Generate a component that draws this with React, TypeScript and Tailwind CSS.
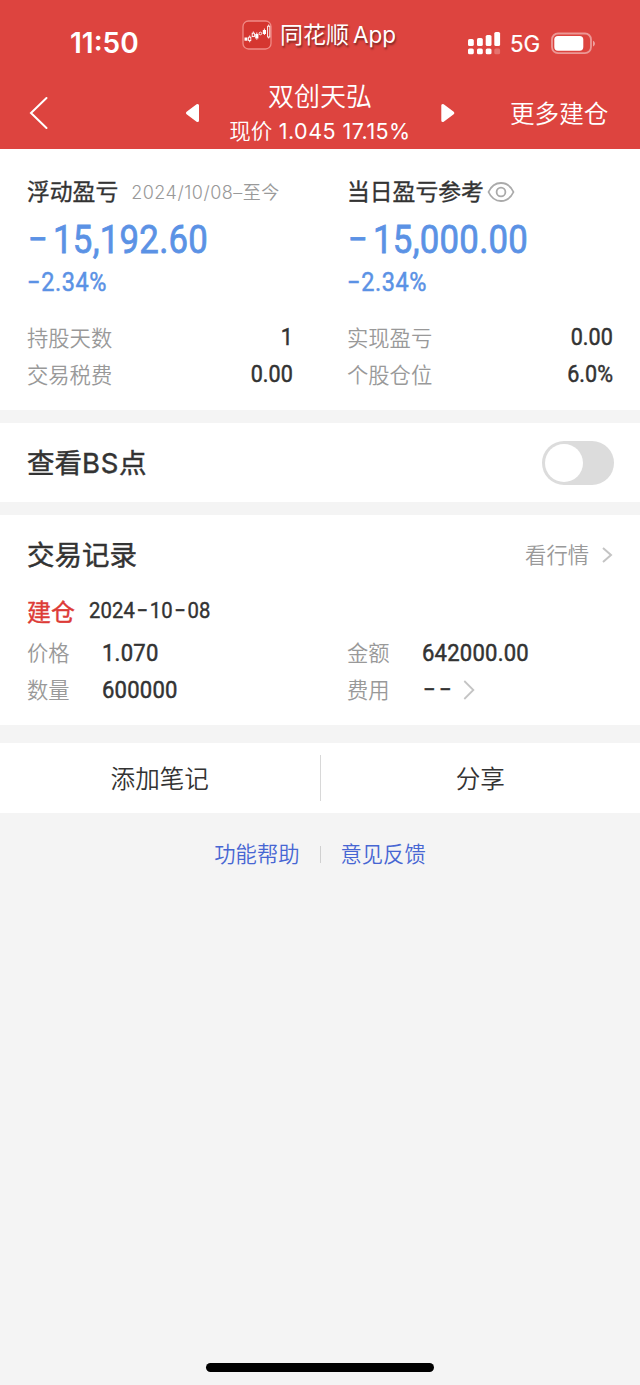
import React, { useState } from 'react';

interface StatProps {
  label: string;
  value: string;
}

interface ProfitColumnProps {
  title: React.ReactNode;
  amount: string;
  percent: string;
  stats: StatProps[];
}

const floatingStats: StatProps[] = [
  { label: '持股天数', value: '1' },
  { label: '交易税费', value: '0.00' },
];

const dailyStats: StatProps[] = [
  { label: '实现盈亏', value: '0.00' },
  { label: '个股仓位', value: '6.0%' },
];

function StatusBar() {
  return (
    <div className="flex h-[76px] items-start">
      <div className="w-[242px] pl-[70px] pt-[27px] text-[28px] leading-[32px] font-semibold">11:50</div>
      <div className="flex w-[225px] items-center pt-[19px]">
        <svg width="30" height="30" viewBox="0 0 30 30" fill="none">
          <rect x="1" y="1" width="28" height="28" rx="5.5" fill="#d53630" stroke="#f08b86" strokeWidth="1.3" />
          <g fill="#fff">
            <rect x="2.5" y="17.5" width="3" height="3.2" />
            <rect x="13.2" y="14" width="3.2" height="4.5" />
            <rect x="20.8" y="10" width="3.2" height="4" />
          </g>
          <g stroke="#fff" strokeWidth="0.9">
            <rect x="6.6" y="17.2" width="2.2" height="3.4" />
            <path d="M7.7 15.5v1.7M7.7 20.6v1.7M11.3 11.5v1.7M14.8 12.5V14M14.8 18.5v1.2M22.4 8.5V10M22.4 14v1M26.7 4.5v1.7M26.7 17v1.5" />
            <rect x="10.2" y="13.2" width="2.2" height="3.4" />
            <circle cx="18.4" cy="13.5" r="1.3" />
            <rect x="25.6" y="6.2" width="2.2" height="10.8" />
          </g>
        </svg>
        <span className="ml-[8px] text-[23px] leading-[32px] whitespace-nowrap [text-shadow:1px_2px_2px_rgba(0,0,0,0.45)]">
          同花顺<span className="ml-[4px] text-[22.5px]">App</span>
        </span>
      </div>
      <div className="flex items-center pt-[25px]">
        <svg width="34" height="24" viewBox="0 0 34 24" fill="#fff">
          <rect x="1" y="7" width="5.8" height="7" rx="1.6" />
          <rect x="10" y="6" width="5.8" height="8" rx="1.6" />
          <rect x="18.7" y="3" width="5.8" height="11" rx="1.6" />
          <rect x="27.3" y="0" width="5.8" height="14" rx="1.6" />
          <rect x="1" y="16.500" width="5.8" height="5.8" rx="1.6" />
          <rect x="10" y="16.500" width="5.8" height="5.8" rx="1.6" />
          <rect x="18.7" y="16.500" width="5.8" height="5.8" rx="1.6" />
          <rect x="27.3" y="16.500" width="5.8" height="5.8" rx="1.6" fillOpacity="0.25" />
        </svg>
        <span className="ml-[9px] pt-px text-[22.3px] leading-[36px] [-webkit-text-stroke:0.2px]">5G</span>
        <svg width="46" height="24" viewBox="0 0 46 24" fill="none" className="ml-[10px]">
          <rect x="2" y="1.5" width="39" height="19.6" rx="6" stroke="#fff" strokeOpacity="0.45" strokeWidth="1.8" />
          <rect x="4.3" y="3.9" width="29" height="14.8" rx="3.6" fill="#fff" />
          <path d="M43 8.800c2.6 1 2.6 4.8 0 5.8z" fill="#fff" fillOpacity="0.5" />
        </svg>
      </div>
    </div>
  );
}

function NavBar() {
  return (
    <div className="flex h-[73px] items-center">
      <button className="w-[185px] pl-[28px]">
        <svg width="22" height="34" viewBox="0 0 22 34" fill="none" stroke="#fff" strokeWidth="2" strokeLinecap="round">
          <path d="M18.5 2 3 17l15.5 15" />
        </svg>
      </button>
      <svg width="16" height="20" viewBox="0 0 16 20" fill="#fff" stroke="#fff" strokeWidth="3" strokeLinejoin="round">
        <path d="M12.5 2.5v15L2.500 10z" />
      </svg>
      <div className="w-[238px] pt-[3px] text-center font-[350]">
        <div className="text-[26px] leading-[34px]">双创天弘</div>
        <div className="text-[21.5px] leading-[34px] whitespace-nowrap">
          现价<span className="font-normal tracking-[0.45px]"> 1.045 17.15%</span>
        </div>
      </div>
      <svg width="16" height="20" viewBox="0 0 16 20" fill="#fff" stroke="#fff" strokeWidth="3" strokeLinejoin="round">
        <path d="M3.8 2.5v15L13.8 10z" />
      </svg>
      <button className="ml-[55px] pt-[3px] text-[24.6px] font-[350] whitespace-nowrap">更多建仓</button>
    </div>
  );
}

function ProfitColumn({ title, amount, percent, stats }: ProfitColumnProps) {
  return (
    <div className="w-[266px]">
      <div className="flex h-[34px] items-center whitespace-nowrap">{title}</div>
      <div className="h-[56px] origin-left scale-x-[0.88] pt-px font-[Roboto] text-[39.5px] leading-[60px] text-[#5b92e5] [-webkit-text-stroke:0.8px]">
        <span className="mr-[6px] ml-[1px]">−</span>
        <span className="tracking-[0.3px]">{amount}</span>
      </div>
      <div className="h-[34px] origin-left scale-x-[0.92] font-[Roboto] text-[25.5px] leading-[34px] text-[#5b92e5] [-webkit-text-stroke:0.5px]">
        <span className="mr-[1px]">−</span>
        <span className="tracking-[0.6px]">{percent}</span>
      </div>
      <div className="mt-[20px]">
        {stats.map((stat) => (
          <div key={stat.label} className="flex h-[37px] items-center justify-between">
            <span className="pt-[2px] text-[21.3px] font-[350] text-[#999]">{stat.label}</span>
            <span className="origin-right scale-x-[0.88] font-[Roboto] text-[24.5px] [-webkit-text-stroke:0.5px]">{stat.value}</span>
          </div>
        ))}
      </div>
    </div>
  );
}

function RecordItem({ label, children }: { label: string; children: React.ReactNode }) {
  return (
    <div className="flex h-[37px] w-[320px] shrink-0 items-center">
      <span className="w-[75px] pt-[2px] text-[21.3px] font-[350] text-[#999]">{label}</span>
      <span className="flex origin-left scale-x-[0.9] items-center pt-px font-[Roboto] text-[24.5px] tracking-[0.25px] [-webkit-text-stroke:0.5px]">
        {children}
      </span>
    </div>
  );
}

export default function App() {
  const [showPoints, setShowPoints] = useState(false);

  return (
    <div className="flex h-[1385px] w-[640px] flex-col overflow-hidden bg-[#f4f4f4] font-[Inter,'Noto_Sans_CJK_SC',sans-serif] text-[#333]">
      {/* 顶部 */}
      <header className="h-[149px] shrink-0 bg-[#dd443f] text-white">
        <StatusBar />
        <NavBar />
      </header>

      {/* 盈亏 */}
      <section className="flex h-[261px] shrink-0 justify-between bg-white px-[27px] pt-[26px]">
        <ProfitColumn
          title={
            <>
              <span className="pt-px text-[22.8px] [-webkit-text-stroke:0.35px]">浮动盈亏</span>
              <span className="ml-[13px] text-[18px] font-[350] tracking-[0.5px] text-[#999]">2024/10/08–至今</span>
            </>
          }
          amount="15,192.60"
          percent="2.34%"
          stats={floatingStats}
        />
        <ProfitColumn
          title={
            <>
              <span className="pt-px text-[22.8px] [-webkit-text-stroke:0.35px]">当日盈亏参考</span>
              <svg width="28" height="22" viewBox="0 0 28 22" fill="none" stroke="#aaa" strokeWidth="1.8" className="ml-[3px]">
                <path d="M1.500 11C7-1 21-1 26.500 11C21 23 7 23 1.500 11z" />
                <circle cx="14" cy="11" r="4.4" />
              </svg>
            </>
          }
          amount="15,000.00"
          percent="2.34%"
          stats={dailyStats}
        />
      </section>

      {/* BS点开关 */}
      <section className="mt-[13px] flex h-[79px] shrink-0 items-center justify-between bg-white px-[27px]">
        <span className="pt-[3px] text-[27.5px] [-webkit-text-stroke:0.45px]">
          查看<span className="tracking-[0.7px]">BS</span>点
        </span>
        <button
          className={`mr-[-1px] flex h-[44px] w-[72px] items-center rounded-full px-[3px] ${
            showPoints ? 'justify-end bg-[#dd443f]' : 'justify-start bg-[#dcdcdc]'
          }`}
          onClick={() => setShowPoints(!showPoints)}
        >
          <span className="h-[38px] w-[38px] rounded-full bg-white" />
        </button>
      </section>

      {/* 交易记录 */}
      <section className="mt-[13px] h-[210px] shrink-0 bg-white pt-[20px] pl-[27px]">
        <div className="flex h-[40px] items-center justify-between pr-[27px]">
          <h2 className="pt-[2px] text-[27.5px] [-webkit-text-stroke:0.45px]">交易记录</h2>
          <button className="flex items-center text-[21.3px] font-[350] text-[#999]">
            <span className="pt-[2px]">看行情</span>
            <svg width="12" height="18" viewBox="0 0 12 18" fill="none" stroke="#c4c4c4" strokeWidth="2" className="ml-[12px]">
              <path d="M2 2l8 7-8 7" />
            </svg>
          </button>
        </div>
        <div className="mt-[17px] flex h-[38px] items-center">
          <span className="pt-[4px] text-[24px] text-[#dd3b37] [-webkit-text-stroke:0.4px]">建仓</span>
          <span className="ml-[14px] origin-left scale-x-[0.9] font-[Roboto] text-[22.5px] tracking-[0.15px] whitespace-nowrap [-webkit-text-stroke:0.4px]">
            2024<span className="mx-[1.7px]">−</span>10<span className="mx-[1.7px]">−</span>08
          </span>
        </div>
        <div className="mt-[4px] flex">
          <RecordItem label="价格">1.070</RecordItem>
          <RecordItem label="金额">642000.00</RecordItem>
        </div>
        <div className="flex">
          <RecordItem label="数量">600000</RecordItem>
          <RecordItem label="费用">
            <span className="ml-px tracking-[4px]">−−</span>
            <svg width="14" height="22" viewBox="0 0 14 22" fill="none" stroke="#c4c4c4" strokeWidth="2" className="ml-[8px]">
              <path d="M2 2l10 9-10 9" />
            </svg>
          </RecordItem>
        </div>
      </section>

      {/* 操作 */}
      <section className="mt-[18px] flex h-[70px] shrink-0 items-center bg-white text-[24.6px] font-[350]">
        <button className="flex-1 pt-[2px]">添加笔记</button>
        <span className="h-[46px] w-px bg-[#d8d8d8]" />
        <button className="flex-1 pt-[2px]">分享</button>
      </section>

      <div className="mt-[22px] flex h-[38px] items-center justify-center text-[21.3px] font-[350] text-[#4766d3]">
        <button className="pt-[2px]">功能帮助</button>
        <span className="mx-[20px] h-[17px] w-px bg-[#d0d0d0]" />
        <button className="pt-[2px]">意见反馈</button>
      </div>

      <div className="mx-auto mt-auto mb-[13px] h-[9px] w-[228px] rounded-full bg-black" />
    </div>
  );
}
